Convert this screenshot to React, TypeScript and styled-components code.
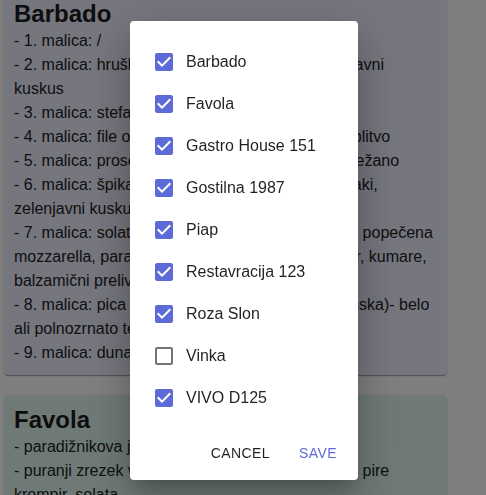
import React, { useState } from 'react';
import styled, { createGlobalStyle } from 'styled-components';

const GlobalStyle = createGlobalStyle`
  html, body {
    margin: 0;
    padding: 0;
    background: #ffffff;
    overflow: hidden;
  }
  body {
    font-family: "Liberation Sans", Arial, sans-serif;
    color: #222;
  }
`;

interface Menu {
  name: string;
  tint: string;
  lines: string[];
}

const menus: Menu[] = [
  {
    name: 'Barbado',
    tint: '#ececfc',
    lines: [
      '- 1. malica: /',
      '- 2. malica: hruška, puranji zrezek v soku, zelenjavni kuskus',
      '- 3. malica: stefani pečenka, pire krompir',
      '- 4. malica: file osliča, pečeni masleni krompir z blitvo',
      '- 5. malica: prosena kaša, hruška, liči, sveže narežano',
      '- 6. malica: špikana pečenka, pire, pečeni odrezaki, zelenjavni kuskus',
      '- 7. malica: solata caprese z rukolo in baziliko pa popečena mozzarella, paradižnik, rukola, olive, paprika, por, kumare, balzamični preliv',
      '- 8. malica: pica (margarita, funghi ali vegetarijanska)- belo ali polnozrnato testo',
      '- 9. malica: dunajski zrezek',
    ],
  },
  {
    name: 'Favola',
    tint: '#def4ec',
    lines: [
      '- paradižnikova juha',
      '- puranji zrezek v smetanovi gobovi omaki, riž ali pire krompir, solata',
      '- sadje',
    ],
  },
];

const restaurants = [
  'Barbado',
  'Favola',
  'Gastro House 151',
  'Gostilna 1987',
  'Piap',
  'Restavracija 123',
  'Roza Slon',
  'Vinka',
  'VIVO D125',
];

const MenuList = () => (
  <List>
    {menus.map((m) => (
      <Card key={m.name} $tint={m.tint}>
        <CardTitle>{m.name}</CardTitle>
        {m.lines.map((l, i) => (
          <CardLine key={i}>{l}</CardLine>
        ))}
      </Card>
    ))}
  </List>
);

const CheckIcon = ({ checked }: { checked: boolean }) =>
  checked ? (
    <svg viewBox="0 0 24 24" width="24" height="24" fill="currentColor">
      <path d="M19 3H5c-1.11 0-2 .9-2 2v14c0 1.1.89 2 2 2h14c1.11 0 2-.9 2-2V5c0-1.1-.89-2-2-2zm-9 14l-5-5 1.41-1.41L10 14.17l7.59-7.59L19 8l-9 9z" />
    </svg>
  ) : (
    <svg viewBox="0 0 24 24" width="24" height="24" fill="currentColor">
      <path d="M19 5v14H5V5h14m0-2H5c-1.1 0-2 .9-2 2v14c0 1.1.9 2 2 2h14c1.1 0 2-.9 2-2V5c0-1.1-.9-2-2-2z" />
    </svg>
  );

const App = () => {
  const [selected, setSelected] = useState<string[]>(
    restaurants.filter((r) => r !== 'Vinka')
  );

  const toggle = (name: string) => {
    setSelected((prev) =>
      prev.includes(name) ? prev.filter((n) => n !== name) : [...prev, name]
    );
  };

  return (
    <>
      <GlobalStyle />
      <MenuList />
      <Backdrop>
        <Dialog role="dialog">
          <DialogContent>
            {restaurants.map((r) => {
              const checked = selected.includes(r);
              return (
                <Option key={r}>
                  <Box $checked={checked}>
                    <HiddenInput
                      type="checkbox"
                      checked={checked}
                      onChange={() => toggle(r)}
                    />
                    <CheckIcon checked={checked} />
                  </Box>
                  <OptionLabel>{r}</OptionLabel>
                </Option>
              );
            })}
          </DialogContent>
          <DialogActions>
            <TextButton>Cancel</TextButton>
            <TextButton $primary>Save</TextButton>
          </DialogActions>
        </Dialog>
      </Backdrop>
    </>
  );
};

const List = styled.div`
  display: flex;
  flex-direction: column;
  gap: 20px;
  width: 443px;
  margin: -11px 0 0 4px;
`;

const Card = styled.div<{ $tint: string }>`
  background: ${(p) => p.$tint};
  border-radius: 4px;
  padding: 10px;
  box-shadow: 0 2px 1px -1px rgba(0, 0, 0, 0.2), 0 1px 1px 0 rgba(0, 0, 0, 0.14),
    0 1px 3px 0 rgba(0, 0, 0, 0.12);
`;

const CardTitle = styled.h2`
  margin: 0;
  font-size: 24px;
  line-height: 30px;
  font-weight: bold;
  color: #1a1a1a;
`;

const CardLine = styled.div`
  font-size: 16px;
  line-height: 24px;
`;

const Backdrop = styled.div`
  position: fixed;
  inset: 0;
  background: rgba(0, 0, 0, 0.5);
  display: flex;
  justify-content: center;
  align-items: flex-start;
  padding: 21px 0 0 2px;
`;

const Dialog = styled.div`
  width: 228px;
  background: #fff;
  border-radius: 4px;
  box-shadow: 0 11px 15px -7px rgba(0, 0, 0, 0.2), 0 24px 38px 3px rgba(0, 0, 0, 0.14),
    0 9px 46px 8px rgba(0, 0, 0, 0.12);
  display: flex;
  flex-direction: column;
`;

const DialogContent = styled.div`
  padding: 20px 24px 8px;
  display: flex;
  flex-direction: column;
`;

const Option = styled.label`
  display: flex;
  align-items: center;
  height: 42px;
  margin-left: -11px;
  cursor: pointer;
`;

const Box = styled.span<{ $checked: boolean }>`
  position: relative;
  display: inline-flex;
  padding: 9px;
  color: ${(p) => (p.$checked ? '#5c6bd7' : '#757575')};
`;

const HiddenInput = styled.input`
  position: absolute;
  inset: 0;
  margin: 0;
  opacity: 0;
  cursor: pointer;
`;

const OptionLabel = styled.span`
  padding-left: 1px;
  font-size: 16px;
  line-height: 24px;
  color: rgba(0, 0, 0, 0.87);
`;

const DialogActions = styled.div`
  display: flex;
  justify-content: flex-end;
  gap: 8px;
  padding: 8px;
`;

const TextButton = styled.button<{ $primary?: boolean }>`
  min-width: 64px;
  padding: 6px 8px;
  border: none;
  background: transparent;
  border-radius: 4px;
  font-family: "Liberation Sans", Arial, sans-serif;
  font-size: 14px;
  line-height: 24.5px;
  letter-spacing: 0.4px;
  text-transform: uppercase;
  color: ${(p) => (p.$primary ? '#5c6bd7' : 'rgba(0, 0, 0, 0.87)')};
  cursor: pointer;
`;

export default App;
